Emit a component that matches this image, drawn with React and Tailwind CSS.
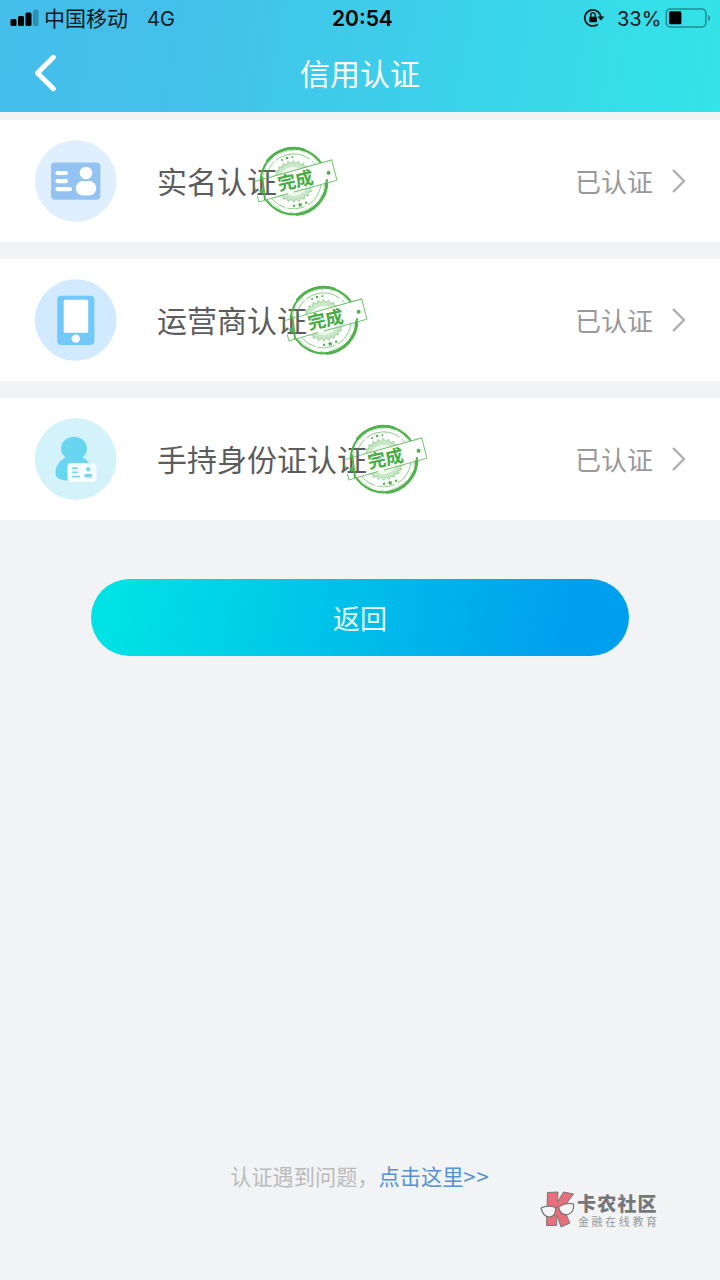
import React from 'react';

const IdCardIcon = () => (
  <svg viewBox="0 0 82 82" className="w-[82px] h-[82px] shrink-0">
    <circle cx="40.7" cy="41" r="40.8" fill="#e0effd" />
    <rect x="16" y="22.6" width="49.4" height="37.2" rx="4" fill="#93c3f3" />
    <g stroke="#fff" strokeWidth="4.2" strokeLinecap="round">
      <path d="M22.5 33h8.4M22.5 41.2h8.4M22.5 49.2h12.4" />
    </g>
    <circle cx="51" cy="33" r="6.3" fill="#fff" />
    <rect x="40.7" y="41" width="20.6" height="14.6" rx="7.3" fill="#fff" />
  </svg>
);

const PhoneIcon = () => (
  <svg viewBox="0 0 82 82" className="w-[82px] h-[82px] shrink-0">
    <circle cx="40.7" cy="41" r="40.8" fill="#d1eaff" />
    <rect x="22.2" y="16.7" width="37.2" height="49.3" rx="4" fill="#73c8fa" />
    <rect x="28.7" y="20.8" width="24.5" height="33" rx="1.5" fill="#fff" />
    <circle cx="40.8" cy="59.6" r="4.2" fill="#fff" />
  </svg>
);

const HandheldIcon = () => (
  <svg viewBox="0 0 82 82" className="w-[82px] h-[82px] shrink-0">
    <circle cx="40.7" cy="41" r="40.8" fill="#d3f2fa" />
    <path
      d="M30.5 39.5C27.5 37.2 26 34.2 26 30.8C26 24 31.6 18.8 39 18.8S52 24 52 30.8C52 34.2 50.4 37.2 47.6 39.5C53.5 42.6 57 48.5 57 55L50 62.5H34C25 62.5 20.5 60.5 20.5 54.5C20.5 48.5 24.4 42.5 30.5 39.5Z"
      fill="#68d6f1"
    />
    <rect x="32.5" y="45" width="29" height="19" rx="4" fill="#f6fdff" />
    <g stroke="#7bdaf2" strokeWidth="1.9" strokeLinecap="round">
      <path d="M37.6 50.3h4.5M37.6 54.4h4.5M37.6 58.6h6.6" />
    </g>
    <circle cx="53.2" cy="51.3" r="2.2" fill="#7bdaf2" />
    <rect x="49.2" y="55.8" width="8" height="3.8" rx="1.9" fill="#7bdaf2" />
  </svg>
);

const gearPoints = Array.from({ length: 48 }, (_, i) => {
  const r = i % 2 ? 18 : 20.8;
  const a = (i * Math.PI) / 24;
  return `${(r * Math.cos(a)).toFixed(1)},${(r * Math.sin(a)).toFixed(1)}`;
}).join(' ');

const Stamp = () => (
  <svg viewBox="-45 -38 90 76" className="relative w-[90px] h-[76px] -ml-[26px] shrink-0">
    <defs>
      <clipPath id="stamp-halves">
        <rect x="-45" y="-50" width="90" height="39.5" />
        <rect x="-45" y="10.5" width="90" height="40" />
      </clipPath>
    </defs>
    <g transform="rotate(-15.5)" fill="none" stroke="#50b24c">
      <g clipPath="url(#stamp-halves)">
        <circle cx="-1.5" cy="0" r="32.9" strokeWidth="2.1" />
        <path d="M-22 -26.2A33.2 33.2 0 0 1 18 -27M31 8A33.2 33.2 0 0 1 -8 32.6" strokeWidth="2.7" />
        <circle cx="-1.5" cy="0" r="27.5" strokeWidth="0.8" strokeDasharray="36 3 18 2" opacity="0.75" />
        <circle cx="-1.5" cy="0" r="31" strokeWidth="0.7" strokeDasharray="15 7 4 9" opacity="0.5" />
        <g transform="translate(-1.5 0)">
          <polygon points={gearPoints} fill="#50b24c" fillOpacity="0.3" strokeWidth="0.7" strokeOpacity="0.6" />
          <circle r="14" fill="#fff" stroke="#fff" opacity="0.7" />
        </g>
      </g>
      <g fill="#50b24c" stroke="none">
        <circle cx="-6.8" cy="-23.7" r="1" />
        <circle cx="-1.5" cy="-24.3" r="1.3" />
        <circle cx="3.8" cy="-23.7" r="1" />
        <circle cx="-7.5" cy="23.7" r="1.2" />
        <path d="M-1.4 21.8l.8 1.5 1.7.3-1.2 1.2.3 1.7-1.6-.8-1.5.8.2-1.7-1.2-1.2 1.7-.3z" />
        <circle cx="5" cy="23.9" r="1.2" />
        <circle cx="34.6" cy="1" r="2" />
        <circle cx="-35" cy="1" r="2.1" />
      </g>
      <path d="M-40 -10.2L41 -10.5L40.6 10.4L-4 10.2M-10 10.3L-40.3 10.5V4M-40.4 0V-6" strokeWidth="1" opacity="0.8" />
      <path d="M-30.5 -13L-34 10.5M31.5 7L28 13" strokeWidth="2" />
    </g>
    <text
      x="0.5"
      y="6.2"
      textAnchor="middle"
      transform="rotate(-12)"
      fill="#45ad42"
      className="text-[18px] font-bold font-['Noto_Sans_CJK_SC',sans-serif]"
    >
      完成
    </text>
  </svg>
);

const items = [
  { label: '实名认证', Icon: IdCardIcon },
  { label: '运营商认证', Icon: PhoneIcon },
  { label: '手持身份证认证', Icon: HandheldIcon },
];

const StatusBar = () => (
  <div className="flex items-center h-[36px] pl-[10px] pr-[9px] text-[#06171c] text-[21px] leading-none">
    <svg viewBox="0 0 29 18" className="w-[29px] h-[18px]">
      <rect x="0.5" y="10" width="6" height="7" rx="1.5" fill="#000" />
      <rect x="8" y="7" width="6" height="10" rx="1.5" fill="#000" />
      <rect x="15.5" y="3.5" width="6" height="13.5" rx="1.5" fill="#000" />
      <rect x="23" y="0.5" width="5.5" height="16.5" rx="1.5" fill="#2f8fb0" />
    </svg>
    <span className="ml-[5px] pb-[2px] w-[84px] whitespace-nowrap">中国移动</span>
    <span className="ml-[19px] pt-px w-[30px] font-['Inter',sans-serif] text-[20px]">4G</span>
    <span className="ml-[155px] w-[62px] font-['Inter',sans-serif] text-[21px] font-semibold text-black">20:54</span>
    <svg viewBox="0 0 22 20" className="ml-auto w-[22px] h-[20px]" fill="none">
      <path d="M14.8 16.2A8 8 0 1 1 17.8 9.6" stroke="#06171c" strokeWidth="1.8" />
      <path d="M14.4 8.5h7l-3.5 4z" fill="#06171c" />
      <rect x="6.2" y="8.8" width="7.6" height="5.4" rx="0.8" fill="#000" />
      <path d="M7.8 9V6.9a2.2 2.2 0 0 1 4.4 0V9" stroke="#000" strokeWidth="1.3" />
    </svg>
    <span className="ml-[12px] pt-px w-[43px] font-['Inter',sans-serif] text-[20px]">33%</span>
    <svg viewBox="0 0 46 20" className="ml-[5px] w-[46px] h-[20px]" fill="none">
      <rect x="1.3" y="0.9" width="39.6" height="18" rx="4.2" stroke="#208c92" strokeWidth="1.5" />
      <rect x="4" y="3.3" width="12.4" height="13" rx="1.6" fill="#000" />
      <path d="M43.2 6.6q3.8 3.4 0 6.8z" fill="#208c92" />
    </svg>
  </div>
);

const App = () => {
  return (
    <div className="w-[720px] h-[1280px] flex flex-col overflow-hidden bg-[#f1f3f5] font-['Noto_Sans_CJK_SC',sans-serif]">
      <header className="h-[112px] shrink-0 bg-linear-[100deg,#45beea_0%,#43c0ea_25%,#33e4e8_100%]">
        <StatusBar />
        <div className="grid grid-cols-[1fr_auto_1fr] items-center h-[74px]">
          <svg viewBox="0 0 22 38" className="ml-[34px] w-[22px] h-[38px]" fill="none">
            <path d="M19.3 3.3L3.5 19L19.3 34.7" stroke="#fff" strokeWidth="5" strokeLinecap="round" strokeLinejoin="round" />
          </svg>
          <h1 className="pb-[3px] text-[30px] leading-none text-white">信用认证</h1>
        </div>
      </header>

      <main className="flex flex-col gap-[17.5px] pt-2">
        {items.map(({ label, Icon }) => (
          <div key={label} className="flex items-center h-[121.5px] pl-[35px] pr-[34px] bg-white">
            <Icon />
            <span className="ml-[40px] pb-[1px] -mr-[1px] text-[30px] leading-none text-[#5c5c5c]">{label}</span>
            <Stamp />
            <span className="ml-auto text-[26px] leading-none text-[#999]">已认证</span>
            <svg viewBox="0 0 14 24" className="ml-[19px] w-[14px] h-[24px]" fill="none">
              <path d="M1.7 1.7L12 12L1.7 22.3" stroke="#b0b0b0" strokeWidth="2.4" strokeLinecap="round" />
            </svg>
          </div>
        ))}
      </main>

      <button className="mt-[59.5px] ml-[91px] w-[538px] h-[77px] pb-[1px] shrink-0 rounded-full bg-linear-[100deg,#00e2e5_5%,#009fee_88%] text-[27px] leading-none text-[#e6fafe]">
        返回
      </button>

      <footer className="mt-auto h-[125px] shrink-0">
        <p className="flex justify-center text-[21.2px] leading-[41px] text-[#bbb]">
          认证遇到问题，
          <a className="text-[#5592d2]">
            点击这里<span className="text-[22px] leading-none tracking-[1px]">&gt;&gt;</span>
          </a>
        </p>
        <div className="flex items-center mt-[-5px] ml-[540px]">
          <svg viewBox="0 0 35 38" className="w-[35px] h-[38px]">
            <path
              d="M7.5 1.5L18 1L17.5 11L23.5 1L33.5 3L23 17L30 32L21 36L17 24L16.5 34.5H6.5Z"
              fill="#e86f7c"
              stroke="#77777a"
            />
            <g fill="#f5f5f6" stroke="#77777a" strokeWidth="1.2">
              <path d="M1 17Q8 13.5 15.5 16.5Q16.5 25 9.5 26Q3 26 1 17Z" />
              <path d="M18.5 16Q26 11 33.5 13Q34.5 21 28 23.5Q20.5 25 18.5 16Z" />
              <path d="M15.5 17.5Q17 15.5 18.5 16.5" fill="none" />
            </g>
          </svg>
          <div className="ml-[2px] whitespace-nowrap">
            <div className="pb-[3px] text-[19px] leading-[19px] tracking-[1.2px] font-black text-[#77777a]">卡农社区</div>
            <div className="pl-[1px] text-[11px] leading-[12px] tracking-[2.6px] text-[#999]">金融在线教育</div>
          </div>
        </div>
      </footer>
    </div>
  );
};

export default App;
